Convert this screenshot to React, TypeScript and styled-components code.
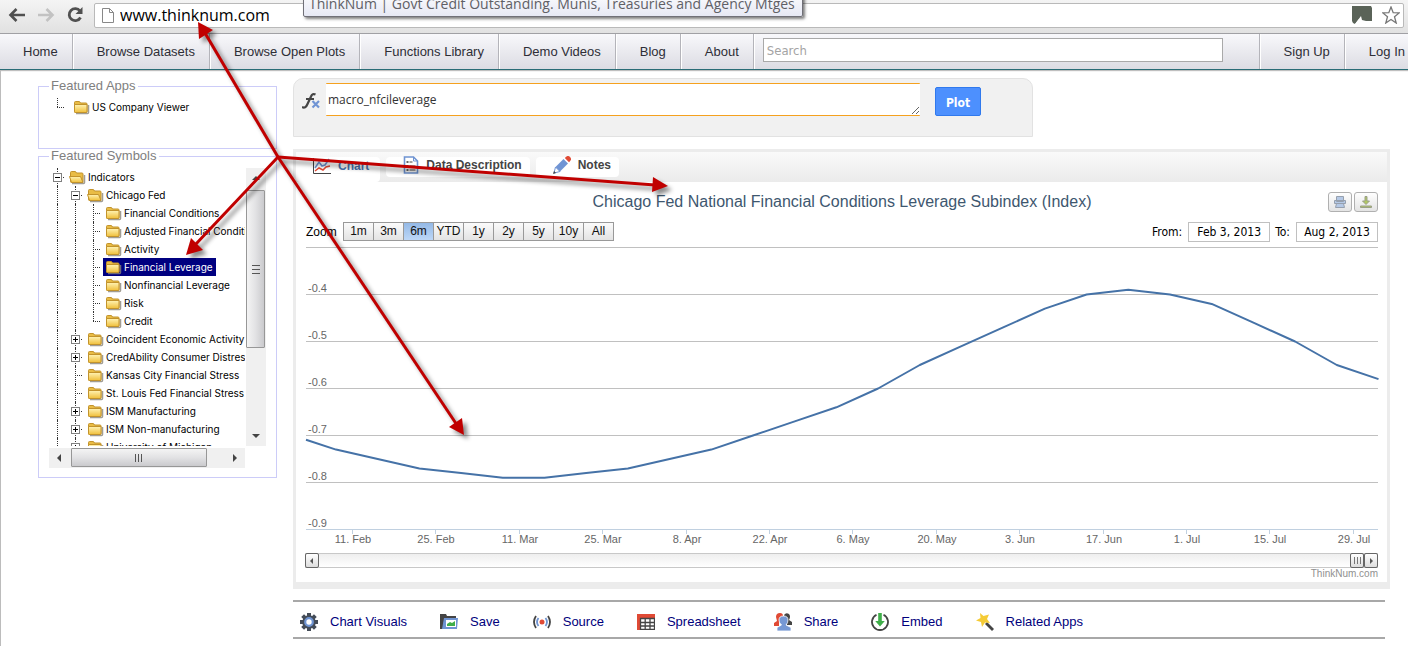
import React from "react";
import styled, { createGlobalStyle, css } from "styled-components";

const sans = `"Liberation Sans", Arial, sans-serif`;
const humanist = `"Open Sans", "Segoe UI", sans-serif`;
const tahoma = `"DejaVu Sans Condensed", "DejaVu Sans", Tahoma, sans-serif`;

const GlobalStyle = createGlobalStyle`
  *, *::before, *::after { box-sizing: border-box; }
  body { margin: 0; background: #fff; color: #000; font-family: ${sans}; font-size: 13px; }
  button, input, textarea { font-family: inherit; margin: 0; }
  a { text-decoration: none; color: inherit; }
  svg { display: block; flex: none; }
`;

const Page = styled.div`
  position: relative;
  min-height: 100vh;
  overflow: hidden;
`;

/* ---------- browser bar ---------- */

const BrowserBar = styled.header`
  position: relative;
  display: flex;
  align-items: center;
  height: 34px;
  padding: 0 4px 3px 7px;
  background: linear-gradient(#f4f4f4, #e1e1e1);
  border-bottom: 1px solid #a0a0a4;
`;

const BrowserButton = styled.button`
  display: flex;
  align-items: center;
  justify-content: center;
  width: 20px;
  height: 20px;
  margin-right: 9px;
  padding: 0;
  border: 0;
  background: none;
`;

const Omnibox = styled.label`
  display: flex;
  flex: 1;
  align-items: center;
  height: 25px;
  padding: 0 3px 0 7px;
  background: #fff;
  border: 1px solid #b9b9b9;
  border-radius: 2px;
`;

const UrlInput = styled.input`
  flex: 1;
  min-width: 0;
  height: 22px;
  padding: 0;
  margin-left: 6px;
  border: 0;
  outline: 0;
  background: transparent;
  color: #000;
  font: 16px/22px ${humanist};
`;

const OmniIcons = styled.span`
  display: flex;
  align-items: center;
  gap: 9px;
`;

const Tooltip = styled.div`
  position: absolute;
  left: 303px;
  top: -10px;
  height: 27px;
  padding: 3px 7px 0 5px;
  background: linear-gradient(#fff, #e6e8f4);
  border: 1px solid #707078;
  border-radius: 2px;
  box-shadow: 2px 2px 3px rgba(0, 0, 0, 0.5);
  color: #606066;
  font: 14px/20px ${humanist};
  white-space: nowrap;
`;

/* ---------- site navigation ---------- */

const Nav = styled.nav`
  display: flex;
  height: 36px;
  background: linear-gradient(#f8f8fb, #dcdce3);
  border-bottom: 1px solid #2a6c76;
  box-shadow: 0 1px 1px rgba(0, 0, 0, 0.25);
`;

const NavLink = styled.a<{ $last?: boolean }>`
  display: flex;
  align-items: center;
  padding: 0 ${(p) => (p.$last ? 3 : 14)}px 0 24px;
  border-right: ${(p) => (p.$last ? 0 : 1)}px solid #b4b4ba;
  box-shadow: ${(p) => (p.$last ? "none" : "1px 0 0 #fff")};
  color: #2e2e36;
  font-size: 13px;
  white-space: nowrap;

  &:first-child { padding-left: 23px; }
`;

const NavSearch = styled.div`
  display: flex;
  flex: 1;
  align-items: flex-start;
  padding: 4px 36px 0 9px;
  border-right: 1px solid #b4b4ba;
  box-shadow: 1px 0 0 #fff;
`;

const SearchInput = styled.input`
  width: 100%;
  height: 24px;
  padding: 0 3px;
  border: 1px solid #a9a9a9;
  background: #fff;
  font: 13px/20px ${tahoma};

  &::placeholder { color: #a4a4a4; opacity: 1; }
`;

/* ---------- page body ---------- */

const Body = styled.div`
  display: flex;
  align-items: flex-start;
  gap: 16px;
  min-height: 576px;
  padding: 8px 18px 8px 37px;
  border-left: 1px solid #bcbcbc;
`;

const Sidebar = styled.aside`
  width: 239px;
  flex: none;
  padding-top: 1px;
`;

const Group = styled.fieldset<{ $bottom: number }>`
  min-width: 0;
  margin: 0;
  padding: 5px 10px ${(p) => p.$bottom}px;
  border: 1px solid #ccccf8;
`;

const GroupTitle = styled.legend`
  padding: 0 2px;
  color: #808080;
  font-size: 13px;
  line-height: 14px;
`;

const TreeFrame = styled.div`
  display: grid;
  grid-template-columns: 196px 20px;
  gap: 2px 1px;
`;

const TreeView = styled.ul<{ $height?: number }>`
  height: ${(p) => (p.$height ? `${p.$height}px` : "auto")};
  margin: 0;
  padding: 0;
  overflow: hidden;
  list-style: none;
`;

const TreeRow = styled.li`
  display: flex;
  height: 18px;
`;

type CellKind = "line" | "tee" | "end" | "node" | "plain";

const TreeCell = styled.span<{ $kind: CellKind; $wide?: boolean }>`
  position: relative;
  flex: none;
  display: flex;
  align-items: center;
  width: ${(p) => (p.$wide ? 22 : 18)}px;
  padding-left: 4px;

  &::before {
    content: "";
    position: absolute;
    left: 8px;
    top: 0;
    height: ${(p) => (p.$kind === "end" ? 9 : 18)}px;
    border-left: 1px dotted #333;
  }

  ${(p) =>
    p.$kind !== "line" &&
    css`
      &::after {
        content: "";
        position: absolute;
        left: 8px;
        top: 9px;
        width: 7px;
        border-top: 1px dotted #333;
      }
    `}
`;

const Toggle = styled.button`
  position: relative;
  z-index: 1;
  width: 9px;
  height: 9px;
  padding: 0;
  border: 1px solid #808080;
  background: #fff;

  svg { width: 7px; height: 7px; }
`;

const TreeLabel = styled.a<{ $selected?: boolean }>`
  display: flex;
  align-items: center;
  gap: 2px;
  padding: 0 3px 0 2px;
  background: ${(p) => (p.$selected ? "#000080" : "transparent")};
  color: ${(p) => (p.$selected ? "#fff" : "#000")};
  font: 10px/18px Inter, ${sans};
  white-space: nowrap;
`;

const ScrollTrack = styled.div<{ $row?: boolean }>`
  display: flex;
  flex-direction: ${(p) => (p.$row ? "row" : "column")};
  background: #f0f0f0;
`;

const ScrollArrow = styled.button`
  display: flex;
  align-items: center;
  justify-content: center;
  flex: none;
  width: 20px;
  height: 20px;
  padding: 0;
  border: 0;
  background: none;
`;

const ScrollThumb = styled.div<{ $row?: boolean }>`
  display: flex;
  align-items: center;
  justify-content: center;
  border: 1px solid #979797;
  border-radius: 1px;
  ${(p) =>
    p.$row
      ? "width: 136px; height: 19px; margin-left: 2px; background: linear-gradient(#f4f4f4, #e2e2e4 50%, #cacacd);"
      : "width: 19px; height: 158px; margin-top: 2px; background: linear-gradient(90deg, #f4f4f4, #e2e2e4 50%, #cacacd);"}
`;

const Spacer = styled.span`
  flex: 1;
`;

const Main = styled.main`
  flex: 1;
  min-width: 0;
`;

const FormulaBar = styled.form`
  display: flex;
  align-items: flex-start;
  max-width: 740px;
  height: 59px;
  padding: 4px 8px 0;
  background: #f1f1f1;
  border: 1px solid #e2e2e2;
  border-radius: 10px 10px 0 0;
`;

const FxLabel = styled.label`
  width: 24px;
  padding-top: 9px;
`;

const FormulaInput = styled.textarea`
  flex: 1;
  min-width: 0;
  height: 33px;
  padding: 7px 2px;
  border: solid #f5a11f;
  border-width: 1px 0;
  border-radius: 1px;
  outline: 0;
  background: #fff;
  color: #333;
  font: 12px/17px ${humanist};
  resize: both;
`;

const PlotButton = styled.button`
  width: 46px;
  height: 29px;
  margin: 4px 43px 0 15px;
  padding: 3px 0 0;
  border: 1px solid #3079ed;
  border-radius: 2px;
  background: #4d90fe;
  color: #fff;
  font: bold 12px ${tahoma};
`;

const Panel = styled.section`
  margin-top: 12px;
  border: solid #ececec;
  border-width: 3px 3px 7px;
`;

const TabBar = styled.div`
  display: flex;
  align-items: flex-start;
  height: 30px;
  padding-top: 5px;
  background: linear-gradient(#fafafa, #ebebeb);
`;

const Tab = styled.button<{ $active?: boolean }>`
  display: flex;
  align-items: center;
  gap: 7px;
  height: ${(p) => (p.$active ? 25 : 20)}px;
  margin-right: 6px;
  padding: ${(p) => (p.$active ? "0 11px 8px 17px" : "0 8px 4px 17px")};
  border: 0;
  border-radius: 4px;
  background: #fff;
  color: ${(p) => (p.$active ? "#4a74b0" : "#444")};
  font-size: 12px;
  font-weight: bold;
`;

const ChartBody = styled.div`
  padding: 10px 9px 2px 10px;
`;

const TitleRow = styled.div`
  display: grid;
  grid-template-columns: 1fr auto 1fr;
  align-items: center;
  height: 20px;
`;

const ChartTitle = styled.h1`
  grid-column: 2;
  margin: 0;
  color: #3e576f;
  font-size: 16px;
  font-weight: normal;
  line-height: 20px;
`;

const ExportButtons = styled.div`
  display: flex;
  justify-content: flex-end;
  gap: 2px;
`;

const ExportButton = styled.button`
  display: flex;
  align-items: center;
  justify-content: center;
  width: 24px;
  height: 20px;
  padding: 0;
  border: 1px solid #b0b0b0;
  border-radius: 3px;
  background: linear-gradient(#fff, #e4e4e4);
`;

const RangeRow = styled.div`
  display: flex;
  align-items: flex-start;
  margin: 10px 0 4px;
  height: 20px;
  font-size: 12px;
  line-height: 20px;
`;

const ZoomLabel = styled.span`
  width: 37px;
`;

const ZoomButton = styled.button<{ $active?: boolean }>`
  width: 31px;
  height: 19px;
  margin-right: -1px;
  padding: 0;
  border: 1px solid #999;
  background: ${(p) => (p.$active ? "linear-gradient(#94b9e6, #bdd7f7)" : "linear-gradient(#fbfbfb, #e3e3e3)")};
  color: #111;
  font-size: 12px;
  line-height: 17px;
`;

const DateField = styled.label`
  display: flex;
  gap: 6px;
  margin-left: 5px;
  font: 12px/20px ${tahoma};
`;

const DateInput = styled.input`
  width: 82px;
  height: 20px;
  padding: 0;
  border: 1px solid #c0c0c0;
  background: #fff;
  color: #000;
  font: 12px/18px ${tahoma};
  text-align: center;
`;

const Plot = styled.svg`
  width: 100%;
  height: auto;
  overflow: visible;
  font-family: ${sans};
  font-size: 11px;
  fill: #666;
`;

const Navigator = styled.div`
  display: flex;
  height: 15px;
  margin: 5px 0 0 -1px;
  border: solid #c8c8c8;
  border-width: 1px 0;
  background: linear-gradient(#eee, #fff);
`;

const NavigatorButton = styled.button`
  display: flex;
  align-items: center;
  justify-content: center;
  width: 14px;
  height: 15px;
  margin-top: -1px;
  padding: 0;
  border: 1px solid #666;
  border-radius: 2px;
  background: linear-gradient(#fff, #ddd);
`;

const Credit = styled.a`
  display: block;
  color: #909090;
  font-size: 10px;
  line-height: 12px;
  text-align: right;
`;

const ActionBar = styled.div`
  display: flex;
  align-items: center;
  gap: 33px;
  height: 39px;
  margin: 11px 5px 0 0;
  padding: 4px 7px 0;
  border: solid #a8a8a8;
  border-width: 2px 0;
`;

const Action = styled.a`
  display: flex;
  align-items: center;
  gap: 12px;
  color: #00007c;
  font-size: 13px;
  white-space: nowrap;
`;

const Arrows = styled.svg`
  position: absolute;
  left: 0;
  top: 0;
  pointer-events: none;
  filter: drop-shadow(4px 4px 2px rgba(0, 0, 0, 0.45));
`;

/* ---------- icons ---------- */

const IconDefs = () => (
  <svg width="0" height="0" style={{ position: "absolute" }} aria-hidden="true">
    <defs>
      <linearGradient id="folderFront" x1="0" y1="0" x2="0" y2="1">
        <stop offset="0" stopColor="#fff3b4" />
        <stop offset="1" stopColor="#f0bf3a" />
      </linearGradient>
    </defs>
  </svg>
);

const Folder = ({ open }: { open?: boolean }) => (
  <svg width="17" height="16" viewBox="0 0 17 16">
    <path d="M3 14.500h11.500q1 0 1-1V6" fill="none" stroke="#8a8578" strokeWidth="1.500" opacity=".8" />
    <path d="M1.500 5V3.500q0-1 1-1h3.500q1 0 1.500 1.500h5.500q1 0 1 1V12.500q0 1-1 1h-10.500q-1 0-1-1z" fill="#e9bc45" stroke="#c2932c" />
    {open ? (
      <path d="M.5 7.500h11l2.500 6H2.500z" fill="url(#folderFront)" stroke="#c2932c" />
    ) : (
      <path d="M1.500 5.500h12.500v7q0 1-1 1h-10.500q-1 0-1-1z" fill="url(#folderFront)" stroke="#c2932c" />
    )}
  </svg>
);

const Triangle = ({ dir }: { dir: "up" | "down" | "left" | "right" }) => {
  const d = { up: "M0 6l4-4 4 4z", down: "M0 2l4 4 4-4z", left: "M6 0L2 4l4 4z", right: "M2 0l4 4-4 4z" }[dir];
  return (
    <svg width="8" height="8" viewBox="0 0 8 8">
      <path d={d} fill="#444" />
    </svg>
  );
};

const Grip = ({ row }: { row?: boolean }) => (
  <svg width="10" height="10" viewBox="0 0 10 10">
    <path d={row ? "M1.500 1v8M4.500 1v8M7.500 1v8" : "M1 1.500h8M1 5.500h8M1 9.500h8"} stroke="#555" />
  </svg>
);

const gearTeeth = [0, 45, 90, 135, 180, 225, 270, 315];

const GearIcon = () => (
  <svg width="18" height="18" viewBox="0 0 18 18">
    {gearTeeth.map((a) => (
      <rect key={a} x="7" y="0" width="4" height="5" fill="#444c58" transform={`rotate(${a} 9 9)`} />
    ))}
    <circle cx="9" cy="9" r="6.800" fill="#444c58" />
    <circle cx="9" cy="9" r="3.800" fill="#fff" stroke="#6f94d2" strokeWidth="2.200" />
  </svg>
);

const SaveIcon = () => (
  <svg width="18" height="18" viewBox="0 0 18 18">
    <path d="M0 16V1h6l1 2h9v2H4v11z" fill="#444" />
    <path d="M2 16L4 5h14l-1 11z" fill="#6f94d2" />
    <path d="M6 7h10v7H6z" fill="#fff" />
    <path d="M7 13v-2l3-2 2 1 3-2v5z" fill="#3fae49" />
  </svg>
);

const SourceIcon = () => (
  <svg width="18" height="18" viewBox="0 0 18 18" fill="none" strokeWidth="1.800">
    <circle cx="9" cy="9" r="2.500" fill="#e04a35" />
    <path d="M5.500 5q-3 4 0 8M12.500 5q3 4 0 8" stroke="#6f94d2" />
    <path d="M3 3q-4 6 0 12M15 3q4 6 0 12" stroke="#444" />
  </svg>
);

const SheetIcon = () => (
  <svg width="18" height="16" viewBox="0 0 18 16">
    <path d="M0 0h18v4H3v12H0z" fill="#e04a35" />
    <path d="M3.500 4v11.500h14V4M3 8.500h15M3 12h15M8.200 4v12M13 4v12M3 4.500h15" fill="none" stroke="#444" strokeWidth="1.300" />
  </svg>
);

const ShareIcon = () => (
  <svg width="18" height="18" viewBox="0 0 18 18">
    <path d="M2 4q0-4 4-4 3 0 3 3v6H5v4H0v-3l3-2z" fill="#e04a35" />
    <path d="M10 2q2-3 5-1 2 2 0 6l3 2v3h-5z" fill="#444" />
    <path d="M9.500 3q4.500 0 4.500 4 0 3-2 5l5 2.500V18H3v-3.500L7.500 12Q5 10 5 7q0-4 4.500-4z" fill="#7698d4" stroke="#fff" strokeWidth=".8" />
  </svg>
);

const EmbedIcon = () => (
  <svg width="18" height="18" viewBox="0 0 18 18">
    <path d="M5.500 1.800a8 8 0 1 0 7 0" fill="none" stroke="#444" strokeWidth="1.800" />
    <path d="M7.200 0h3.600v8h3L9 13.500 4.200 8h3z" fill="#3fae49" />
  </svg>
);

const WandIcon = () => (
  <svg width="18" height="18" viewBox="0 0 18 18">
    <path d="M10 10l7 7" stroke="#444" strokeWidth="2.800" />
    <path d="M4 0l3.500 3L13 1.500 11 6l3 4-5-.5L6 14 5 9 0 7.500 4.500 5z" fill="#f5cb35" />
  </svg>
);

const ChartIcon = () => (
  <svg width="18" height="16" viewBox="0 0 18 16" fill="none">
    <path d="M.5 0v15.500H18" stroke="#444" />
    <path d="M2 10l4-6 3 4 3-1 4-6" stroke="#6f94d2" strokeWidth="1.500" />
    <path d="M2 13l4-3 4 2 3-3 4-1" stroke="#e04a35" strokeWidth="1.500" />
  </svg>
);

const DocIcon = () => (
  <svg width="16" height="18" viewBox="0 0 16 18" fill="none">
    <path d="M1.500 1h9l4 4v12h-13z" fill="#fff" stroke="#6f94d2" strokeWidth="1.600" />
    <path d="M10.500 1v4h4" stroke="#6f94d2" />
    <path d="M3.500 6h2M3.500 10h2M3.500 14h2" stroke="#333" strokeWidth="1.600" />
    <path d="M6.500 6h3M6.500 10h6M6.500 14h6" stroke="#444" />
  </svg>
);

const PencilIcon = () => (
  <svg width="18" height="18" viewBox="0 0 18 18">
    <path d="M1 17l1.500-6 4.500 4.500z" fill="#fff" stroke="#7094d4" />
    <path d="M0 18l1-3 2 2z" fill="#444" />
    <path d="M2.500 11L10.500 3l4.500 4.500-8 8z" fill="#7094d4" />
    <path d="M11.800 2q2.700-3.500 5.200-1t-1 5.200z" fill="#e04a35" />
  </svg>
);

const FxIcon = () => (
  <svg width="18" height="18" viewBox="0 0 18 18" fill="none" role="img" aria-label="Formula">
    <path d="M0 15q3.500 2 5.500-3L9 4.500q1.500-3.500 4.500-2M4 7h8" stroke="#444" strokeWidth="2.200" />
    <path d="M10.500 9l6.500 6.500M17 9l-6.500 6.500" stroke="#7094d4" strokeWidth="2.200" />
  </svg>
);

const PrintIcon = () => (
  <svg width="14" height="14" viewBox="0 0 14 14" fill="#b5c9e6" stroke="#96a0ae">
    <path d="M3.500 1.500h7v5h-7zM1.500 5.500h11v3h-11zM3.500 8.500h7l1 4h-9z" />
  </svg>
);

const DownloadIcon = () => (
  <svg width="14" height="14" viewBox="0 0 14 14" fill="#b0c860" stroke="#9a9f88">
    <path d="M6 1.500h2V6h2.500L7 9.500 3.500 6H6zM1.500 11h11v1.500h-11z" />
  </svg>
);

/* ---------- data ---------- */

interface Node {
  cells: CellKind[];
  toggle?: "+" | "-";
  open?: boolean;
  selected?: boolean;
  label: string;
}

const leaf = (label: string, last?: boolean, selected?: boolean): Node => ({
  cells: ["line", "line", last ? "end" : "tee"],
  label,
  selected,
});
const branch = (label: string, toggle?: "+"): Node => ({ cells: ["line", toggle ? "node" : "tee"], toggle, label });

const symbols: Node[] = [
  { cells: ["node"], toggle: "-", open: true, label: "Indicators" },
  { cells: ["line", "node"], toggle: "-", open: true, label: "Chicago Fed" },
  leaf("Financial Conditions"),
  leaf("Adjusted Financial Conditions"),
  leaf("Activity"),
  leaf("Financial Leverage", false, true),
  leaf("Nonfinancial Leverage"),
  leaf("Risk"),
  leaf("Credit", true),
  branch("Coincident Economic Activity", "+"),
  branch("CredAbility Consumer Distress", "+"),
  branch("Kansas City Financial Stress"),
  branch("St. Louis Fed Financial Stress"),
  branch("ISM Manufacturing", "+"),
  branch("ISM Non-manufacturing", "+"),
  branch("University of Michigan", "+"),
];

const zooms = ["1m", "3m", "6m", "YTD", "1y", "2y", "5y", "10y", "All"];
const yTicks = ["-0.4", "-0.5", "-0.6", "-0.7", "-0.8", "-0.9"];
const xTicks = ["11. Feb", "25. Feb", "11. Mar", "25. Mar", "8. Apr", "22. Apr", "6. May", "20. May", "3. Jun", "17. Jun", "1. Jul", "15. Jul", "29. Jul"];

/* weekly readings; the first falls on the left edge of the plot */
const start = -0.709;
const weekly = [
  -0.73, -0.75, -0.77, -0.78, -0.79, -0.79, -0.78, -0.77, -0.75, -0.73, -0.7, -0.67, -0.64, -0.6, -0.55, -0.51,
  -0.47, -0.43, -0.4, -0.39, -0.4, -0.42, -0.46, -0.5, -0.55, -0.58,
];
const yOf = (v: number) => 48.5 + (-0.4 - v) * 470;
const series = [`0,${yOf(start)}`, ...weekly.map((v, i) => `${30 + i * 41.7},${yOf(v)}`)].join(" ");

const actions = [
  { label: "Chart Visuals", icon: <GearIcon /> },
  { label: "Save", icon: <SaveIcon /> },
  { label: "Source", icon: <SourceIcon /> },
  { label: "Spreadsheet", icon: <SheetIcon /> },
  { label: "Share", icon: <ShareIcon /> },
  { label: "Embed", icon: <EmbedIcon /> },
  { label: "Related Apps", icon: <WandIcon /> },
];

const TreeNode = ({ node }: { node: Node }) => (
  <TreeRow>
    {node.cells.map((kind, i) => (
      <TreeCell key={i} $kind={kind}>
        {kind === "node" && (
          <Toggle type="button" aria-label={node.toggle === "+" ? "Expand" : "Collapse"}>
            <svg viewBox="0 0 7 7">
              <path d={node.toggle === "+" ? "M1 3.500h5M3.500 1v5" : "M1 3.500h5"} stroke="#000" />
            </svg>
          </Toggle>
        )}
      </TreeCell>
    ))}
    <TreeLabel href="#" $selected={node.selected}>
      <Folder open={node.open} />
      {node.label}
    </TreeLabel>
  </TreeRow>
);

export default function App() {
  return (
    <Page>
      <GlobalStyle />
      <IconDefs />
      <BrowserBar>
        <BrowserButton aria-label="Back">
          <svg width="18" height="16" viewBox="0 0 18 16" fill="none" stroke="#505050" strokeWidth="2.600">
            <path d="M17 8H3M8.500 2L2.500 8l6 6" />
          </svg>
        </BrowserButton>
        <BrowserButton aria-label="Forward">
          <svg width="18" height="16" viewBox="0 0 18 16" fill="none" stroke="#c2c2c2" strokeWidth="2.600">
            <path d="M1 8h14M9.500 2l6 6-6 6" />
          </svg>
        </BrowserButton>
        <BrowserButton aria-label="Reload">
          <svg width="18" height="18" viewBox="0 0 18 18">
            <path d="M14 5A6 6 0 1 0 14.500 11.500" fill="none" stroke="#505050" strokeWidth="2.800" />
            <path d="M16.500 1v7h-7z" fill="#505050" />
          </svg>
        </BrowserButton>
        <Omnibox>
          <svg width="12" height="15" viewBox="0 0 12 15" fill="#fff" stroke="#888">
            <path d="M.5.5h7l4 4v10H.5zM7.500.5v4h4" />
          </svg>
          <UrlInput aria-label="Address" defaultValue="www.thinknum.com" />
          <OmniIcons>
            <svg width="22" height="20" viewBox="0 0 22 20">
              <path d="M1 1h19l1 2v13H11l-3-2-4 5-2-1-1-2z" fill="#5a6358" />
              <path d="M4 19l6-8 1 4h4l-4 1-5 3z" fill="#fff" />
            </svg>
            <svg width="18" height="18" viewBox="0 0 18 18" fill="none" stroke="#777" strokeWidth="1.300">
              <path d="M9 1l2.200 5.700 6 .2-4.700 3.800L14.200 17 9 13.500 3.800 17l1.700-6.300L.8 6.900l6-.2z" />
            </svg>
          </OmniIcons>
        </Omnibox>
        <Tooltip role="tooltip">ThinkNum | Govt Credit Outstanding. Munis, Treasuries and Agency Mtges</Tooltip>
      </BrowserBar>

      <Nav>
        <NavLink href="#">Home</NavLink>
        <NavLink href="#">Browse Datasets</NavLink>
        <NavLink href="#">Browse Open Plots</NavLink>
        <NavLink href="#">Functions Library</NavLink>
        <NavLink href="#">Demo Videos</NavLink>
        <NavLink href="#">Blog</NavLink>
        <NavLink href="#">About</NavLink>
        <NavSearch>
          <SearchInput type="search" aria-label="Search" placeholder="Search" />
        </NavSearch>
        <NavLink href="#">Sign Up</NavLink>
        <NavLink href="#" $last>Log In</NavLink>
      </Nav>

      <Body>
        <Sidebar>
          <Group $bottom={32}>
            <GroupTitle>Featured Apps</GroupTitle>
            <TreeView>
              <TreeRow>
                <TreeCell $kind="end" $wide />
                <TreeLabel href="#">
                  <Folder />
                  US Company Viewer
                </TreeLabel>
              </TreeRow>
            </TreeView>
          </Group>
          <Group $bottom={9}>
            <GroupTitle>Featured Symbols</GroupTitle>
            <TreeFrame>
              <TreeView $height={278}>
                {symbols.map((n) => (
                  <TreeNode key={n.label} node={n} />
                ))}
              </TreeView>
              <ScrollTrack>
                <ScrollArrow aria-label="Scroll up"><Triangle dir="up" /></ScrollArrow>
                <ScrollThumb><Grip /></ScrollThumb>
                <Spacer />
                <ScrollArrow aria-label="Scroll down"><Triangle dir="down" /></ScrollArrow>
              </ScrollTrack>
              <ScrollTrack $row>
                <ScrollArrow aria-label="Scroll left"><Triangle dir="left" /></ScrollArrow>
                <ScrollThumb $row><Grip row /></ScrollThumb>
                <Spacer />
                <ScrollArrow aria-label="Scroll right"><Triangle dir="right" /></ScrollArrow>
              </ScrollTrack>
            </TreeFrame>
          </Group>
        </Sidebar>

        <Main>
          <FormulaBar onSubmit={(e) => e.preventDefault()}>
            <FxLabel htmlFor="formula"><FxIcon /></FxLabel>
            <FormulaInput id="formula" defaultValue="macro_nfcileverage" />
            <PlotButton type="submit">Plot</PlotButton>
          </FormulaBar>

          <Panel>
            <TabBar>
              <Tab $active><ChartIcon />Chart</Tab>
              <Tab><DocIcon />Data Description</Tab>
              <Tab><PencilIcon />Notes</Tab>
            </TabBar>
            <ChartBody>
              <TitleRow>
                <ChartTitle>Chicago Fed National Financial Conditions Leverage Subindex (Index)</ChartTitle>
                <ExportButtons>
                  <ExportButton aria-label="Print"><PrintIcon /></ExportButton>
                  <ExportButton aria-label="Download"><DownloadIcon /></ExportButton>
                </ExportButtons>
              </TitleRow>
              <RangeRow>
                <ZoomLabel>Zoom</ZoomLabel>
                {zooms.map((z) => (
                  <ZoomButton key={z} $active={z === "6m"}>{z}</ZoomButton>
                ))}
                <Spacer />
                <DateField>From: <DateInput defaultValue="Feb 3, 2013" /></DateField>
                <DateField>To: <DateInput defaultValue="Aug 2, 2013" /></DateField>
              </RangeRow>
              <Plot viewBox="0 0 1072 302">
                <path d="M0 1.500H1072" stroke="#c0c0c0" />
                {yTicks.map((t, i) => (
                  <g key={t}>
                    <path d={`M0 ${48.5 + i * 47}H1072`} stroke={i === 5 ? "#c0d0e0" : "#c0c0c0"} />
                    <text x="2" y={46 + i * 47}>{t}</text>
                  </g>
                ))}
                {xTicks.map((t, i) => (
                  <g key={t}>
                    <path d={`M${Math.round(46 + i * 83.4) + 0.5} 283v5`} stroke="#c0d0e0" />
                    <text x={Math.round(47 + i * 83.4)} y="297" textAnchor="middle">{t}</text>
                  </g>
                ))}
                <polyline points={series} fill="none" stroke="#4572a7" strokeWidth="2" strokeLinejoin="round" />
              </Plot>
              <Navigator>
                <NavigatorButton aria-label="Earlier">
                  <svg width="6" height="6" viewBox="0 0 6 6"><path d="M4 0v6L1 3z" fill="#555" /></svg>
                </NavigatorButton>
                <Spacer />
                <NavigatorButton aria-label="Visible range">
                  <svg width="9" height="7" viewBox="0 0 9 7"><path d="M1.500 0v7M4.500 0v7M7.500 0v7" stroke="#777" /></svg>
                </NavigatorButton>
                <NavigatorButton aria-label="Later">
                  <svg width="6" height="6" viewBox="0 0 6 6"><path d="M2 0v6l3-3z" fill="#555" /></svg>
                </NavigatorButton>
              </Navigator>
              <Credit href="#">ThinkNum.com</Credit>
            </ChartBody>
          </Panel>

          <ActionBar>
            {actions.map((a) => (
              <Action key={a.label} href="#">
                {a.icon}
                {a.label}
              </Action>
            ))}
          </ActionBar>
        </Main>
      </Body>

      <Arrows width="690" height="460" viewBox="0 0 690 460" aria-hidden="true">
        <g stroke="#c00000" strokeWidth="3" fill="none">
          <path d="M278 157L205 33" />
          <path d="M278 157L195 245" />
          <path d="M278 157L655 185" />
          <path d="M278 157L457 425" />
        </g>
        <g fill="#c00000">
          <path d="M198 22l15 8-14 9z" />
          <path d="M186 255l5-17 12 12z" />
          <path d="M668 186l-16 6 1-15z" />
          <path d="M464 435l-15-8 13-9z" />
        </g>
      </Arrows>
    </Page>
  );
}
